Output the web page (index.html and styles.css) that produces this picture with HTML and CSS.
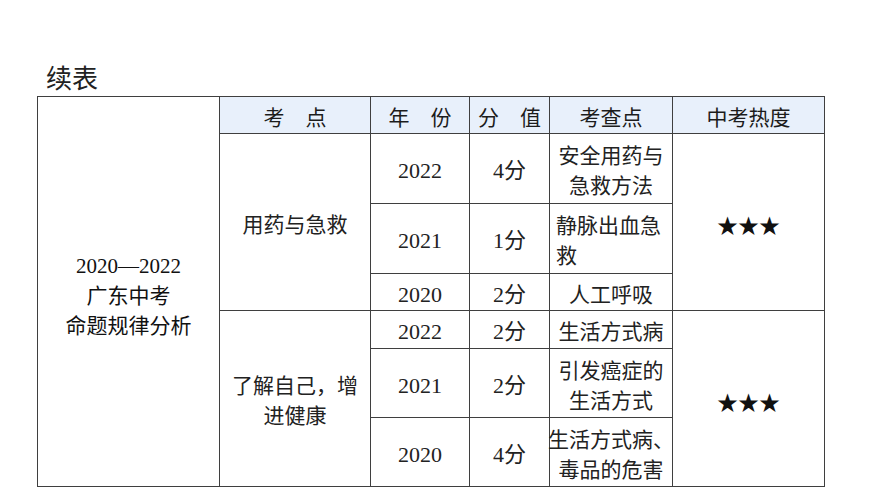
FILE: index.html
```html
<!DOCTYPE html>
<html lang="zh-CN">
<head>
<meta charset="utf-8">
<title>续表</title>
<link rel="stylesheet" href="styles.css">
</head>
<body>
<div class="page">
  <div class="title">续表</div>
  <table class="grid">
    <colgroup>
      <col class="c1"><col class="c2"><col class="c3"><col class="c4"><col class="c5"><col class="c6">
    </colgroup>
    <tr class="h37">
      <td rowspan="7" class="lead"><div>2020—2022</div><div>广东中考</div><div>命题规律分析</div></td>
      <th>考　点</th>
      <th>年　份</th>
      <th>分　值</th>
      <th>考查点</th>
      <th>中考热度</th>
    </tr>
    <tr class="h70">
      <td rowspan="3">用药与急救</td>
      <td class="num">2022</td>
      <td class="num">4分</td>
      <td>安全用药与<br>急救方法</td>
      <td rowspan="3" class="stars">★★★</td>
    </tr>
    <tr class="h70">
      <td class="num">2021</td>
      <td class="num">1分</td>
      <td class="left">静脉出血急<br>救</td>
    </tr>
    <tr class="h37">
      <td class="num">2020</td>
      <td class="num">2分</td>
      <td>人工呼吸</td>
    </tr>
    <tr class="h38">
      <td rowspan="3">了解自己，增<br>进健康</td>
      <td class="num">2022</td>
      <td class="num">2分</td>
      <td>生活方式病</td>
      <td rowspan="3" class="stars">★★★</td>
    </tr>
    <tr class="h69">
      <td class="num">2021</td>
      <td class="num">2分</td>
      <td>引发癌症的<br>生活方式</td>
    </tr>
    <tr class="h69">
      <td class="num">2020</td>
      <td class="num">4分</td>
      <td class="wide"><div class="over"><span>生活方式病、</span><span>毒品的危害</span></div></td>
    </tr>
  </table>
</div>
</body>
</html>
```
FILE: styles.css
```css
html, body {
  margin: 0;
  padding: 0;
  background: #ffffff;
}
.page {
  padding: 62px 0 0 37px;
  font-family: "Liberation Serif", "Noto Sans CJK SC", serif;
  color: #222222;
}
.title {
  margin-left: 9px;
  font-family: "Noto Sans CJK SC", sans-serif;
  font-size: 26px;
  line-height: 30px;
  height: 34px;
  color: #222222;
}
.grid {
  border-collapse: collapse;
  table-layout: fixed;
  width: 787px;
  font-size: 21px;
  line-height: 30px;
}
.c1 { width: 182px; }
.c2 { width: 151px; }
.c3 { width: 99px; }
.c4 { width: 80px; }
.c5 { width: 123px; }
.c6 { width: 152px; }
.grid th, .grid td {
  border: 1px solid #3f3f3f;
  padding: 5px 0 0 0;
  text-align: center;
  vertical-align: middle;
  font-weight: normal;
  overflow: visible;
}
.grid th {
  padding: 1px 0 0 0;
  background: #e8f0fb;
  font-family: "Noto Sans CJK SC", sans-serif;
  color: #1c1c1c;
}
.h37 { height: 37px; }
.h38 { height: 38px; }
.h69 { height: 69px; }
.h70 { height: 70px; }
.num { font-size: 22px; }
.lead {
  color: #111111;
  font-weight: 500;
  padding-top: 8px !important;
}
.lead div { line-height: 30px; }
.left {
  text-align: left !important;
  padding-left: 6px !important;
}
.stars {
  font-family: "Noto Sans CJK SC", sans-serif;
  font-size: 21px;
  color: #111111;
  padding-top: 4px !important;
}
.over {
  display: flex;
  flex-direction: column;
  align-items: center;
  white-space: nowrap;
}
```
